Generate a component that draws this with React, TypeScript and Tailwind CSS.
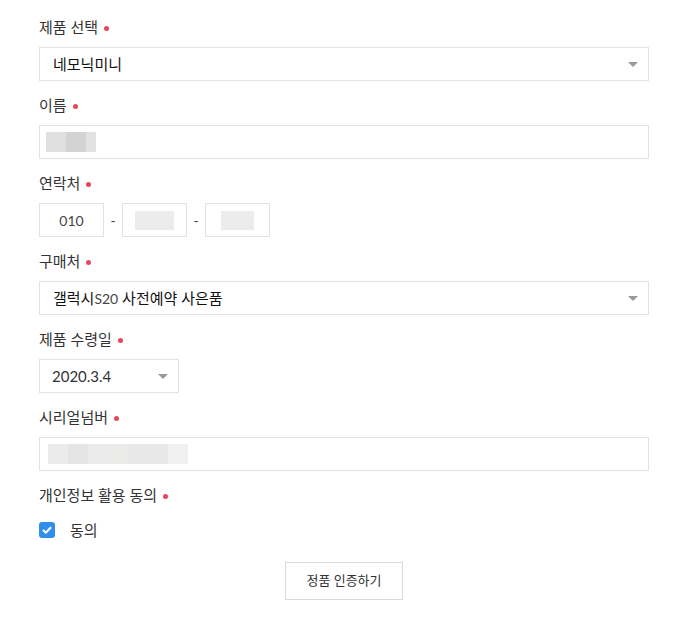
import { ReactNode } from "react";

const font = { fontFamily: '"Lato", "Noto Sans CJK KR", sans-serif' };

function Label({ children }: { children: ReactNode }) {
  return (
    <div className="flex items-center h-[20px] text-[15px] text-[#333]">
      <span>{children}</span>
      <span className="ml-[6px] mt-[3px] w-[5px] h-[5px] rounded-full bg-[#e8465a]" />
    </div>
  );
}

function Arrow() {
  return (
    <svg width="10" height="5" viewBox="0 0 10 5" className="shrink-0">
      <path d="M0 0 L10 0 L5 5 Z" fill="#999" />
    </svg>
  );
}

// gray blocks that stand in for masked text
function Mask({ cells }: { cells: [number, string][] }) {
  return (
    <div className="flex h-[20px]">
      {cells.map(([w, c], i) => (
        <div key={i} className="h-full" style={{ width: w, background: c }} />
      ))}
    </div>
  );
}

function Field({ label, children }: { label: string; children: ReactNode }) {
  return (
    <div className="mb-[14px]">
      <Label>{label}</Label>
      <div className="mt-[10px]">{children}</div>
    </div>
  );
}

export default function App() {
  return (
    <div className="bg-white w-[679px] h-[620px] pl-[39px] pr-[30px] pt-[17px]" style={font}>
      <Field label="제품 선택">
        <div className="flex items-center justify-between h-[34px] border border-[#e2e2e2] pl-[13px] pr-[10px] text-[15px] text-[#111]">
          <span>네모닉미니</span>
          <Arrow />
        </div>
      </Field>

      <Field label="이름">
        <div className="flex items-center h-[34px] border border-[#e2e2e2] pl-[6px]">
          <Mask cells={[[20, "#e0e0e0"], [20, "#d3d3d3"], [10, "#e0e1e3"]]} />
        </div>
      </Field>

      <Field label="연락처">
        <div className="flex items-center text-[14px] text-[#444]">
          <div className="flex items-center justify-center w-[65px] h-[34px] border border-[#e2e2e2]">010</div>
          <span className="w-[18px] text-center">-</span>
          <div className="flex items-center justify-center w-[65px] h-[34px] border border-[#e2e2e2]">
            <div className="w-[39px] h-[19px] bg-[#ececec]" />
          </div>
          <span className="w-[18px] text-center">-</span>
          <div className="flex items-center justify-center w-[65px] h-[34px] border border-[#e2e2e2]">
            <div className="w-[33px] h-[19px] bg-[#ececec]" />
          </div>
        </div>
      </Field>

      <Field label="구매처">
        <div className="flex items-center justify-between h-[34px] border border-[#e2e2e2] pl-[13px] pr-[10px] text-[15px] text-[#111]">
          <span>
            갤럭시<span className="text-[14px] text-[#444]">S20</span> 사전예약 사은품
          </span>
          <Arrow />
        </div>
      </Field>

      <Field label="제품 수령일">
        <div className="flex items-center justify-between w-[140px] h-[34px] border border-[#e2e2e2] pl-[12px] pr-[10px] text-[15px] text-[#333]">
          <span>2020.3.4</span>
          <Arrow />
        </div>
      </Field>

      <Field label="시리얼넘버">
        <div className="flex items-center h-[34px] border border-[#e2e2e2] pl-[8px]">
          <Mask
            cells={[
              [20, "#ebebeb"],
              [20, "#e4e4e4"],
              [20, "#ebebeb"],
              [20, "#ebebe9"],
              [40, "#e8e8e8"],
              [20, "#f0f0f0"],
            ]}
          />
        </div>
      </Field>

      <Label>개인정보 활용 동의</Label>
      <div className="flex items-center h-[20px] mt-[15px] text-[15px] text-[#333]">
        <div className="flex items-center justify-center w-[16px] h-[16px] rounded-[3px] bg-[#2f8fea]">
          <svg width="10" height="8" viewBox="0 0 10 8">
            <path d="M1 4 L3.8 6.6 L9 1.2" fill="none" stroke="white" strokeWidth="2" />
          </svg>
        </div>
        <span className="ml-[15px]">동의</span>
      </div>

      <div className="flex justify-center mt-[22px]">
        <button className="w-[118px] h-[38px] border border-[#d9d9d9] bg-white text-[13px] text-[#333]">
          정품 인증하기
        </button>
      </div>
    </div>
  );
}
